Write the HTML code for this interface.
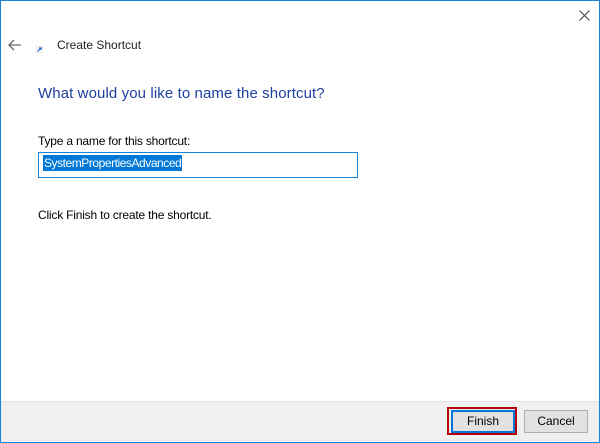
<!DOCTYPE html>
<html><head><style>
body{margin:0;width:600px;height:443px;overflow:hidden;font-family:"Liberation Sans",sans-serif;background:#fff}
.win{position:absolute;left:0;top:0;width:598px;height:441px;border:1px solid #1883d7;background:#fff}
.t{position:absolute;white-space:nowrap}
.foot{position:absolute;left:0;right:0;bottom:0;height:40px;background:#f0f0f0;border-top:1px solid #dfdfdf}
.btn{position:absolute;height:21px;border:1px solid #adadad;background:#e1e1e1;font-size:12px;text-align:center;line-height:21px;color:#000}
</style></head><body>
<div class="win">
<svg style="position:absolute;left:578px;top:9px" width="11" height="11"><path d="M0.5 0.5L10.5 10.5M10.5 0.5L0.5 10.5" stroke="#444" stroke-width="1.1"/></svg>
<svg style="position:absolute;left:7px;top:38px" width="14" height="12"><path d="M13 6H2M6 1L1 6l5 5" stroke="#666" stroke-width="1.3" fill="none"/></svg>
<svg style="position:absolute;left:35px;top:45px" width="7" height="7"><rect x="0" y="0" width="7" height="7" fill="#fff" stroke="#aaa" stroke-width=".5"/><path d="M1.5 5.5L5 2M3 2h2v2" stroke="#1f5fd0" stroke-width="1.2" fill="none"/></svg>
<div class="t" style="left:56px;top:37px;font-size:12px;color:#222">Create Shortcut</div>
<div class="t" style="left:37px;top:84px;font-size:15px;color:#1e3f9e;letter-spacing:0.1px">What would you like to name the shortcut?</div>
<div class="t" style="left:37px;top:133px;font-size:12px;color:#000;letter-spacing:-0.2px">Type a name for this shortcut:</div>
<div style="position:absolute;left:37px;top:151px;width:318px;height:24px;border:1px solid #1883d7;background:#fff"></div>
<div class="t" style="left:42px;top:154px;height:16px;background:#0078d7;color:#fff;font-size:12px;line-height:16px;padding:0 1px;letter-spacing:-0.45px">SystemPropertiesAdvanced</div>
<div class="t" style="left:37px;top:207px;font-size:12px;color:#000;letter-spacing:-0.2px">Click Finish to create the shortcut.</div>
<div class="foot">
<div style="position:absolute;left:446px;top:5px;width:70px;height:28px;border:2px solid #b8000d;box-sizing:border-box"></div>
<div class="btn" style="left:450px;top:8px;width:60px;border:2px solid #0078d7;height:19px;line-height:19px">Finish</div>
<div class="btn" style="left:523px;top:8px;width:62px">Cancel</div>
</div>
</div>
</body></html>
